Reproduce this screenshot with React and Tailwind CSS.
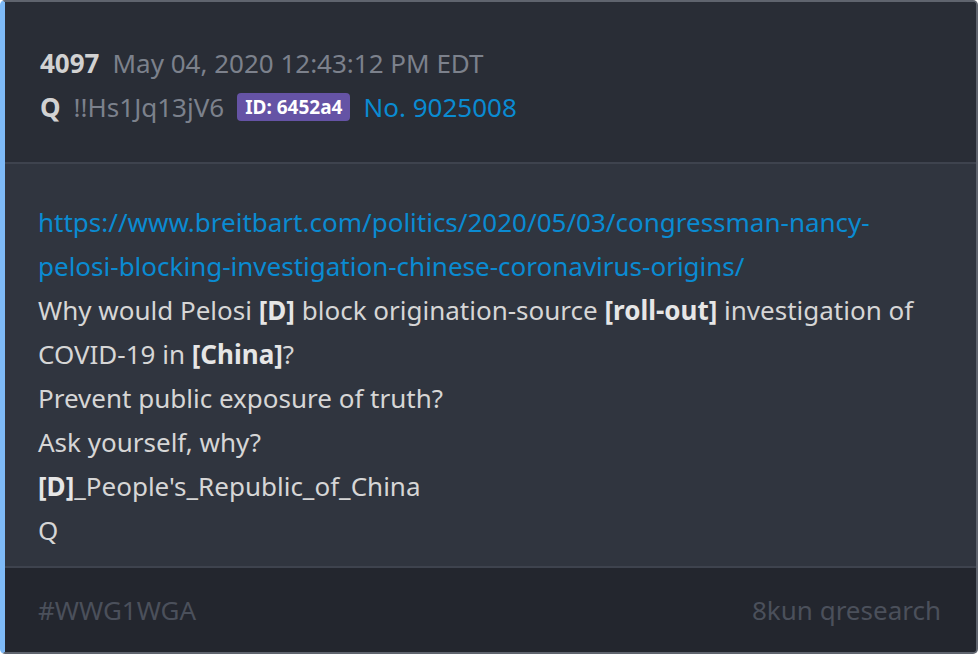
export default function App() {
  const font = { fontFamily: '"Noto Sans", "Open Sans", sans-serif' };
  return (
    <div className="w-[978px] h-[654px] bg-white" style={font}>
      <div className="w-[978px] h-[654px] flex flex-col rounded-[5px] overflow-hidden border-t-[2px] border-r-[2px] border-b-[2px] border-l-[5px] border-t-[#5f646e] border-r-[#5f646e] border-b-[#5f646e] border-l-[#7ebaf7] bg-[#292d36]">
        <div className="bg-[#292d36] pl-[35px] pt-[39px] pb-[33px] text-[26px] leading-[44px] border-b-[2px] border-b-[#3e434e]">
          <div className="flex items-center gap-[13px]">
            <span className="font-bold text-[#d2d2d2]">4097</span>
            <span className="text-[#7c818c]">May 04, 2020 12:43:12 PM EDT</span>
          </div>
          <div className="flex items-center gap-[13px]">
            <span className="font-bold text-[#d2d2d2]">Q</span>
            <span className="text-[#7c818c]">!!Hs1Jq13jV6</span>
            <span className="bg-[#6553a5] text-white font-bold text-[19px] leading-[28px] h-[28px] px-[8px] rounded-[4px]">ID: 6452a4</span>
            <span className="text-[#0a8bd2]">No. 9025008</span>
          </div>
        </div>
        <div className="bg-[#30353f] pl-[33px] pr-[33px] pt-[36px] pb-[14px] text-[26px] leading-[44px] text-[#d6d6d6] border-b-[2px] border-b-[#3e434e]">
          <div className="text-[#0a8bd2] break-words">https://www.breitbart.com/politics/2020/05/03/congressman-nancy-pelosi-blocking-investigation-chinese-coronavirus-origins/</div>
          <div>Why would Pelosi <b className="text-[#e6e6e6]">[D]</b> block origination-source <b className="text-[#e6e6e6]">[roll-out]</b> investigation of COVID-19 in <b className="text-[#e6e6e6]">[China]</b>?</div>
          <div>Prevent public exposure of truth?</div>
          <div>Ask yourself, why?</div>
          <div><b className="text-[#e6e6e6]">[D]</b>_People's_Republic_of_China</div>
          <div>Q</div>
        </div>
        <div className="flex-1 bg-[#23262e] flex items-center justify-between pl-[33px] pr-[35px] text-[26px] text-[#4b505b]">
          <span>#WWG1WGA</span>
          <span>8kun qresearch</span>
        </div>
      </div>
    </div>
  );
}
